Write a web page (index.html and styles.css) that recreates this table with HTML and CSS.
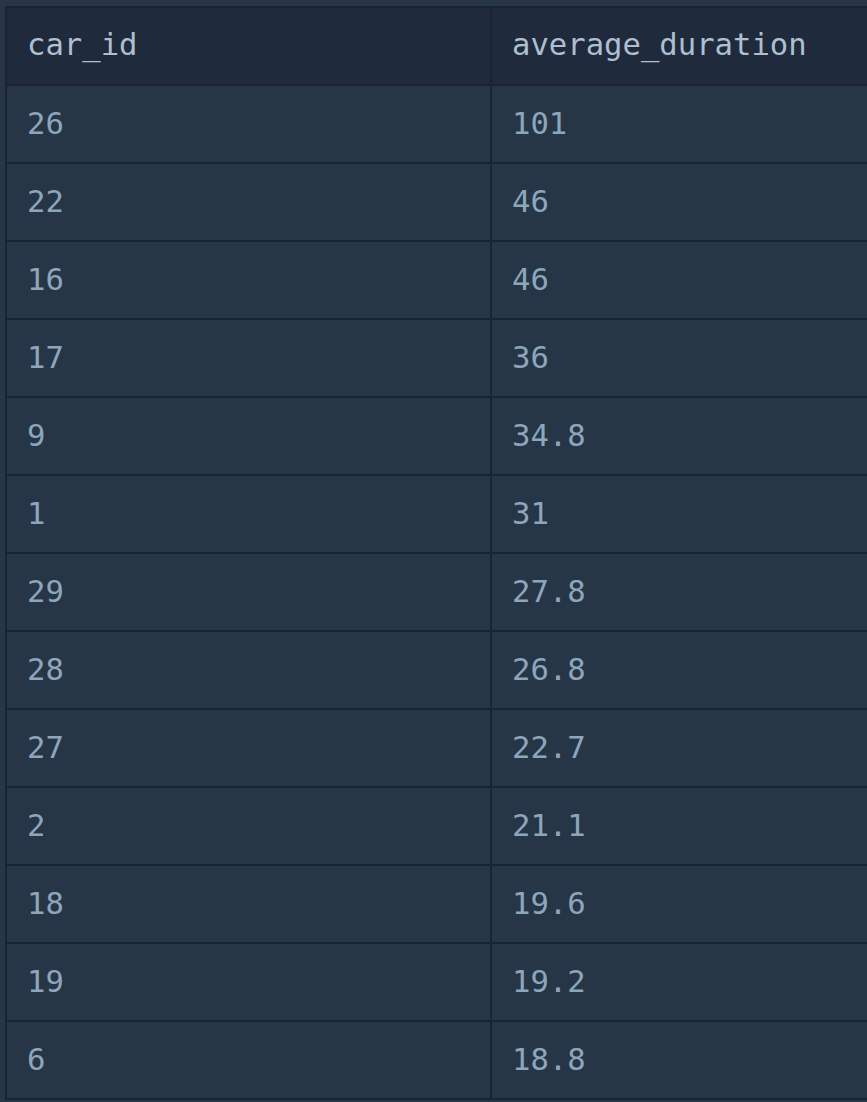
FILE: index.html
```html
<!DOCTYPE html>
<html>
<head>
<meta charset="utf-8">
<link rel="stylesheet" href="styles.css">
</head>
<body>
<div class="wrap">
<table class="grid">
<thead>
<tr><th>car_id</th><th>average_duration</th></tr>
</thead>
<tbody>
<tr><td>26</td><td>101</td></tr>
<tr><td>22</td><td>46</td></tr>
<tr><td>16</td><td>46</td></tr>
<tr><td>17</td><td>36</td></tr>
<tr><td>9</td><td>34.8</td></tr>
<tr><td>1</td><td>31</td></tr>
<tr><td>29</td><td>27.8</td></tr>
<tr><td>28</td><td>26.8</td></tr>
<tr><td>27</td><td>22.7</td></tr>
<tr><td>2</td><td>21.1</td></tr>
<tr><td>18</td><td>19.6</td></tr>
<tr><td>19</td><td>19.2</td></tr>
<tr><td>6</td><td>18.8</td></tr>
</tbody>
</table>
</div>
</body>
</html>
```
FILE: styles.css
```css
html, body {
  margin: 0;
  padding: 0;
  background: #263646;
  overflow: hidden;
}
.wrap {
  padding: 6px 0 0 5px;
  width: 1100px;
}
.grid {
  border-collapse: separate;
  border-spacing: 2px;
  background: #1a2332;
  table-layout: fixed;
  width: 972px;
  font-family: "DejaVu Sans Mono", monospace;
  font-size: 30.6px;
}
.grid th, .grid td {
  height: 76px;
  padding: 0 0 1px 20px;
  text-align: left;
  vertical-align: middle;
  font-weight: normal;
  white-space: nowrap;
  box-sizing: border-box;
}
.grid th {
  background: #1f2a3c;
  color: #aebfcf;
  padding-bottom: 3px;
}
.grid td {
  background: #263646;
  color: #8ea6bb;
}
```
